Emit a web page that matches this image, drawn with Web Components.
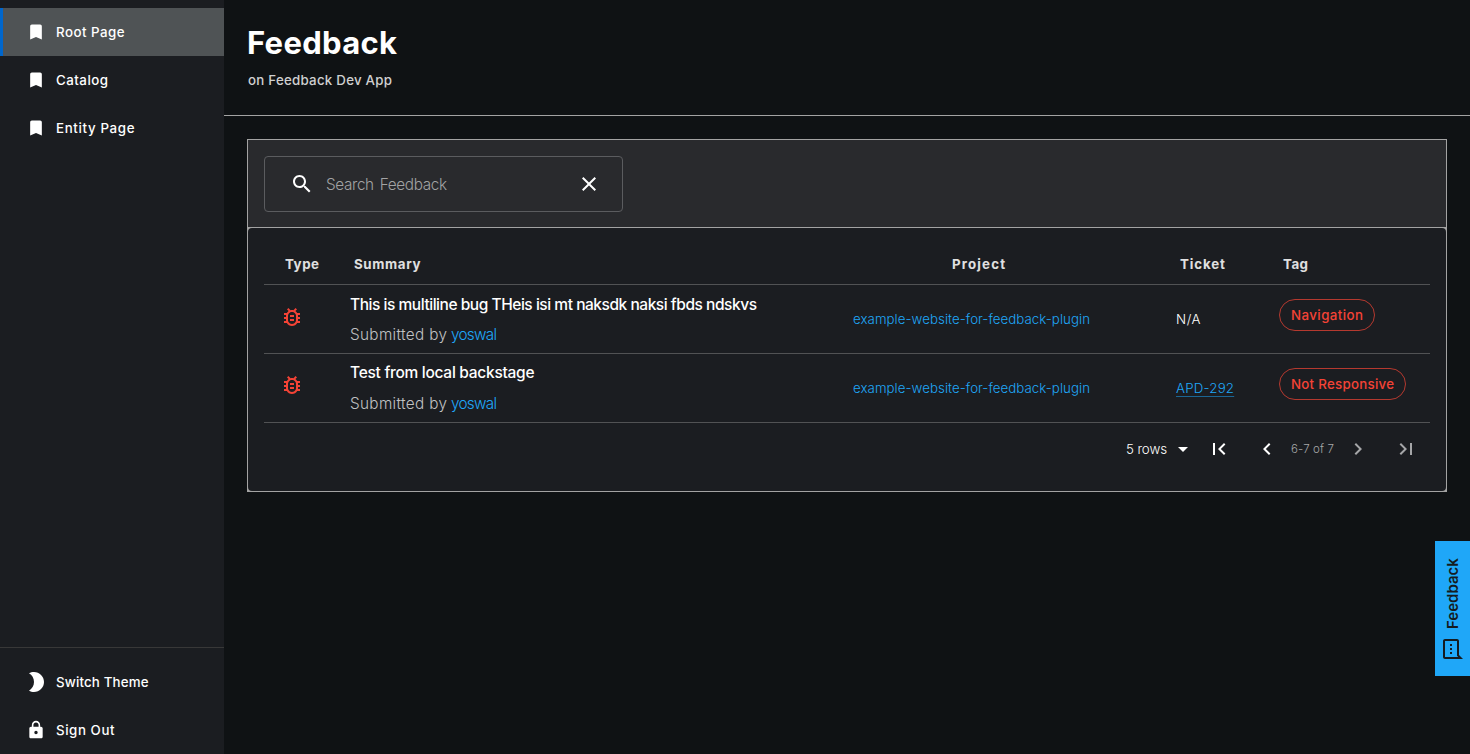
<!DOCTYPE html>
<html lang="en"><head><meta charset="utf-8"><title>Feedback</title>
<style>html,body{margin:0;height:100%;background:#0f1214;overflow:hidden}</style></head>
<body><feedback-app></feedback-app>
<script>
const define = (name, html, setup) => {
  const t = document.createElement('template');
  t.innerHTML = html;
  customElements.define(name, class extends HTMLElement {
    connectedCallback() {
      if (this.shadowRoot) return;
      this.attachShadow({mode: 'open'}).append(t.content.cloneNode(true));
      if (setup) setup(this, this.shadowRoot);
    }
  });
};

// Single line of text; "w" spreads its letters over that many pixels.
define('fit-text', `<style>:host{display:inline-block;white-space:pre;flex:none}</style><slot></slot>`, el => {
  const w = +el.getAttribute('w');
  if (!w) return;
  const r = el.getBoundingClientRect();
  const s = (w - Math.max(r.width, r.height)) / (el.textContent.length - 1);
  el.style.letterSpacing = s.toFixed(3) + 'px';
  el.style.marginInlineEnd = (-s).toFixed(3) + 'px';
});

const icons = {
  bookmark: 'M17 3H7c-1.1 0-2 .9-2 2v16l7-3 7 3V5c0-1.1-.9-2-2-2z',
  moon: 'M10 2c-1.82 0-3.53.5-5 1.35C7.99 5.08 10 8.3 10 12s-2.01 6.92-5 8.65C6.47 21.5 8.18 22 10 22c5.52 0 10-4.48 10-10S15.52 2 10 2z',
  lock: 'M18 8h-1V6c0-2.76-2.24-5-5-5S7 3.24 7 6v2H6c-1.1 0-2 .9-2 2v10c0 1.1.9 2 2 2h12c1.1 0 2-.9 2-2V10c0-1.1-.9-2-2-2zm-6 9c-1.1 0-2-.9-2-2s.9-2 2-2 2 .9 2 2-.9 2-2 2zm3.1-9H8.9V6c0-1.71 1.39-3.1 3.1-3.1 1.71 0 3.1 1.39 3.1 3.1v2z',
  search: 'M15.5 14h-.79l-.28-.27C15.41 12.59 16 11.11 16 9.5 16 5.91 13.09 3 9.5 3S3 5.91 3 9.5 5.91 16 9.5 16c1.61 0 3.09-.59 4.23-1.57l.27.28v.79l5 4.99L20.49 19l-4.99-5zm-6 0C7.01 14 5 11.99 5 9.5S7.01 5 9.5 5 14 7.01 14 9.5 11.99 14 9.5 14z',
  clear: 'M19 6.41L17.59 5 12 10.59 6.41 5 5 6.41 10.59 12 5 17.59 6.41 19 12 13.41 17.59 19 19 17.59 13.41 12z',
  bug: 'M20 8h-2.81c-.45-.78-1.07-1.45-1.82-1.96L17 4.41 15.59 3l-2.17 2.17C12.96 5.06 12.49 5 12 5s-.96.06-1.41.17L8.41 3 7 4.41l1.62 1.63C7.88 6.55 7.26 7.22 6.81 8H4v2h2.09c-.05.33-.09.66-.09 1v1H4v2h2v1c0 .34.04.67.09 1H4v2h2.81c1.04 1.79 2.97 3 5.19 3s4.15-1.21 5.19-3H20v-2h-2.09c.05-.33.09-.66.09-1v-1h2v-2h-2v-1c0-.34-.04-.67-.09-1H20V8zm-4 4v3c0 .22-.03.47-.07.7l-.1.65-.37.65c-.72 1.24-2.04 2-3.46 2s-2.74-.77-3.46-2l-.37-.64-.1-.65C8.03 15.48 8 15.23 8 15v-4c0-.23.03-.48.07-.7l.1-.65.37-.65c.3-.52.72-.97 1.21-1.31l.57-.39.74-.18c.31-.08.63-.12.94-.12.32 0 .63.04.95.12l.68.16.61.42c.5.34.91.78 1.21 1.31l.38.65.1.65c.04.22.07.47.07.69v1zm-6 2h4v2h-4zm0-4h4v2h-4z',
  drop: 'M7 10l5 5 5-5z',
  first: 'M18.41 16.59L13.82 12l4.59-4.59L17 6l-6 6 6 6zM6 6h2v12H6z',
  left: 'M15.41 7.41L14 6l-6 6 6 6 1.41-1.41L10.83 12z',
  right: 'M10 6L8.59 7.41 13.17 12l-4.58 4.59L10 18l6-6z',
  last: 'M5.59 7.41L10.18 12l-4.59 4.59L7 18l6-6-6-6zM16 6h2v12h-2z',
  sms: 'M20 2H4c-1.1 0-2 .9-2 2v18l4-4h14c1.1 0 2-.9 2-2V4c0-1.1-.9-2-2-2zm0 14H5.17L4 17.17V4h16v12zM7 9h2v2H7zm8 0h2v2h-2zm-4 0h2v2h-2z'
};
define('md-icon', `<style>:host{display:block;flex:none;width:24px;height:24px}svg{display:block;width:100%;height:100%;fill:currentColor}</style><svg viewBox="0 0 24 24"><path/></svg>`,
  (el, root) => root.querySelector('path').setAttribute('d', icons[el.getAttribute('name')]));

define('nav-item', `<style>
:host{display:flex;align-items:center;height:48px;box-sizing:border-box;color:#fff;font-weight:550;font-size:13.3px;line-height:20px}
:host([active]){background:#4f5355;border-left:3px solid #06c}
:host([active]) .i{margin-left:21px}
.i{width:24px;margin:0 8px 0 24px;display:grid;place-items:center}
</style><div class="i"><slot name="icon"></slot></div><slot></slot>`);

define('side-bar', `<style>
:host{display:flex;flex-direction:column;width:224px;flex:none;box-sizing:border-box;padding-top:8px;background:#1b1d21}
.s{flex:1}.d{height:1px;background:#383838;margin-bottom:10px}
.m{width:20px;height:20px}
</style>
<nav-item active><md-icon class="m" slot="icon" name="bookmark"></md-icon><fit-text w="68.5">Root Page</fit-text></nav-item>
<nav-item><md-icon class="m" slot="icon" name="bookmark"></md-icon><fit-text w="52">Catalog</fit-text></nav-item>
<nav-item><md-icon class="m" slot="icon" name="bookmark"></md-icon><fit-text w="78.5">Entity Page</fit-text></nav-item>
<div class="s"></div><div class="d"></div>
<nav-item><md-icon slot="icon" name="moon"></md-icon><fit-text w="92.5">Switch Theme</fit-text></nav-item>
<nav-item><md-icon class="m" slot="icon" name="lock"></md-icon><fit-text w="58.5">Sign Out</fit-text></nav-item>`);

define('page-header', `<style>
:host{display:flex;flex-direction:column;align-items:flex-start;height:116px;box-sizing:border-box;padding:23px 0 0 24px;border-bottom:1px solid #a3a3a3}
.t{font-weight:700;font-size:31px;line-height:40px;color:#fff;margin-left:-1px}
.s{font-weight:500;font-size:13.3px;line-height:20px;color:#cfd0d0;margin-top:7px}
</style><fit-text class="t" w="150">Feedback</fit-text><fit-text class="s" w="144">on Feedback Dev App</fit-text>`);

define('search-box', `<style>
:host{display:flex;align-items:center;width:359px;height:56px;box-sizing:border-box;border:1px solid #5b5c5f;border-radius:4px;padding:0 21px 0 25px;color:#fff}
fit-text{margin:2px 0 0 12px;color:#a2a3a4;font-size:15.3px;font-weight:300;line-height:24px;word-spacing:2px}.g{flex:1}
</style><md-icon name="search"></md-icon><fit-text w="121">Search Feedback</fit-text><span class="g"></span><md-icon name="clear"></md-icon>`);

define('tag-chip', `<style>
:host{display:inline-flex;align-items:center;height:32px;box-sizing:border-box;border:1px solid #b5392f;border-radius:16px;padding:0 11px;color:#f44336;font-weight:550;font-size:13.3px}
</style><slot></slot>`);

define('feedback-row', `<style>
:host{display:grid;grid-template-columns:86px 503px 323px 103px 1fr;height:69px;box-sizing:border-box;border-bottom:1px solid #515254;color:#fff;font-weight:300;font-size:13.3px;line-height:20px}
.b{color:#f44336;margin:20px 0 0 16px}
:host([second]) .b{margin-top:19px}
.t{display:flex;font-size:15.5px;font-weight:450;line-height:24px;margin-top:8px}
:host([second]) .t{margin-top:7px}
.u{display:flex;font-size:15.3px;line-height:24px;margin-top:6px;color:#c1c2c3}
:host([second]) .u{margin-top:7px}
.c{margin-top:24px}
.g{margin-top:14px}
::slotted(.link),.l{color:#1fa7f8}.u .l{margin-left:4px}
</style>
<md-icon class="b" name="bug"></md-icon>
<div><div class="t"><slot name="title"></slot></div><div class="u"><fit-text w="97">Submitted by</fit-text><fit-text class="l" w="46">yoswal</fit-text></div></div>
<div class="c l"><fit-text w="237">example-website-for-feedback-plugin</fit-text></div>
<div class="c"><slot name="ticket"></slot></div>
<div class="g"><slot name="tag"></slot></div>`);

define('feedback-table', `<style>
:host{display:block;padding:16px 16px 0;height:263px;box-sizing:border-box;background:#1b1d21;border-radius:4px}
.h{display:grid;grid-template-columns:90px 598px 228px 103px 1fr;height:41px;box-sizing:border-box;border-bottom:1px solid #515254;padding-top:10px;color:#e0e0e0;font-weight:700;font-size:13.3px;line-height:20px}
.h > :first-child{margin-left:21px}
.a{text-decoration:underline #1b6593;text-decoration-thickness:1px;text-underline-offset:3px}
.f{display:flex;align-items:center;justify-content:flex-end;height:52px;color:#fff;font-size:13.3px;font-weight:300;padding-right:12px}
.f .r{font-size:11.5px;color:#a7a8a9}.x{color:#a5a6a8}
</style>
<div class="h"><div><fit-text w="34">Type</fit-text></div><div><fit-text w="66.5">Summary</fit-text></div><div><fit-text w="53">Project</fit-text></div><div><fit-text w="45">Ticket</fit-text></div><div><fit-text w="25">Tag</fit-text></div></div>
<feedback-row><fit-text slot="title" w="407">This is multiline bug THeis isi mt naksdk naksi fbds ndskvs</fit-text><fit-text slot="ticket" w="24.5">N/A</fit-text><tag-chip slot="tag"><fit-text w="72">Navigation</fit-text></tag-chip></feedback-row>
<feedback-row second><fit-text slot="title" w="184.5">Test from local backstage</fit-text><fit-text class="link a" slot="ticket" w="58">APD-292</fit-text><tag-chip slot="tag"><fit-text w="103">Not Responsive</fit-text></tag-chip></feedback-row>
<div class="f"><fit-text w="41">5 rows</fit-text><md-icon name="drop" style="margin-left:4px"></md-icon><md-icon name="first" style="margin-left:12px"></md-icon><md-icon name="left" style="margin-left:24px"></md-icon><fit-text class="r" w="43" style="margin-left:12px">6-7 of 7</fit-text><md-icon class="x" name="right" style="margin-left:12px"></md-icon><md-icon class="x" name="last" style="margin-left:24px"></md-icon></div>`);

define('feedback-card', `<style>
:host{display:flex;flex-direction:column;gap:1px;padding:1px;margin:23px 23px 0;background:#a3a3a3}
.b{height:87px;box-sizing:border-box;background:#292a2d;padding:16px}
</style><div class="b"><search-box></search-box></div><feedback-table></feedback-table>`);

define('feedback-button', `<style>
:host{position:fixed;right:0;top:541px;width:35px;height:135px;box-sizing:border-box;padding-top:16px;background:#1fa7f8;color:#151b20;display:flex;flex-direction:column;align-items:center;font-weight:600;font-size:15px;line-height:24px}
fit-text{writing-mode:vertical-rl;transform:rotate(180deg);height:72px}
md-icon{transform:rotate(-90deg);margin-top:8px}
</style><fit-text w="72">Feedback</fit-text><md-icon name="sms"></md-icon>`);
customElements.get('feedback-button');

define('feedback-app', `<style>
:host{display:flex;height:100vh;background:#0f1214;font-family:Inter,"Liberation Sans",sans-serif}
main{flex:1;min-width:0}
</style><side-bar></side-bar><main><page-header></page-header><feedback-card></feedback-card></main><feedback-button></feedback-button>`);
</script></body></html>
